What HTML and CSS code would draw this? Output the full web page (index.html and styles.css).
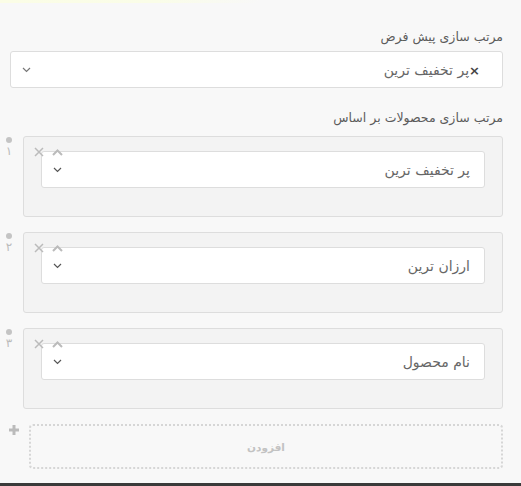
FILE: index.html
```html
<!DOCTYPE html>
<html lang="fa" dir="rtl">

<head>
    <meta charset="UTF-8">
    <meta name="viewport" content="width=device-width, initial-scale=1.0">
    <title>مرتب سازی</title>
    <link rel="stylesheet" href="styles.css">
</head>

<body>
    <div class="top-strip"></div>
    <div class="page">
        <label class="field-label">مرتب سازی پیش فرض</label>
        <div class="select-box main-select">
            <span class="value"><span class="clear">×</span>پر تخفیف ترین</span>
            <svg class="chevron" width="9" height="6" viewBox="0 0 9 6"><path d="M1 1l3.5 3.5L8 1" fill="none" stroke="#777" stroke-width="1.2"/></svg>
        </div>

        <label class="field-label second">مرتب سازی محصولات بر اساس</label>

        <div class="repeater">
            <div class="rep-row">
                <div class="rep-box">
                    <div class="select-box">
                        <span class="value">پر تخفیف ترین</span>
                        <svg class="chevron" width="9" height="6" viewBox="0 0 9 6"><path d="M1 1l3.5 3.5L8 1" fill="none" stroke="#555" stroke-width="1.2"/></svg>
                    </div>
                    <div class="row-tools">
                        <svg width="10" height="10" viewBox="0 0 10 10"><path d="M1 1l8 8M9 1l-8 8" stroke="#bbb" stroke-width="1.5"/></svg>
                        <svg width="11" height="7" viewBox="0 0 11 7"><path d="M1 6l4.5-4.5L10 6" fill="none" stroke="#bbb" stroke-width="2"/></svg>
                    </div>
                </div>
                <div class="rep-handle"><span class="dot"></span><span class="num">۱</span></div>
            </div>

            <div class="rep-row">
                <div class="rep-box">
                    <div class="select-box">
                        <span class="value">ارزان ترین</span>
                        <svg class="chevron" width="9" height="6" viewBox="0 0 9 6"><path d="M1 1l3.5 3.5L8 1" fill="none" stroke="#555" stroke-width="1.2"/></svg>
                    </div>
                    <div class="row-tools">
                        <svg width="10" height="10" viewBox="0 0 10 10"><path d="M1 1l8 8M9 1l-8 8" stroke="#bbb" stroke-width="1.5"/></svg>
                        <svg width="11" height="7" viewBox="0 0 11 7"><path d="M1 6l4.5-4.5L10 6" fill="none" stroke="#bbb" stroke-width="2"/></svg>
                    </div>
                </div>
                <div class="rep-handle"><span class="dot"></span><span class="num">۲</span></div>
            </div>

            <div class="rep-row">
                <div class="rep-box">
                    <div class="select-box">
                        <span class="value">نام محصول</span>
                        <svg class="chevron" width="9" height="6" viewBox="0 0 9 6"><path d="M1 1l3.5 3.5L8 1" fill="none" stroke="#555" stroke-width="1.2"/></svg>
                    </div>
                    <div class="row-tools">
                        <svg width="10" height="10" viewBox="0 0 10 10"><path d="M1 1l8 8M9 1l-8 8" stroke="#bbb" stroke-width="1.5"/></svg>
                        <svg width="11" height="7" viewBox="0 0 11 7"><path d="M1 6l4.5-4.5L10 6" fill="none" stroke="#bbb" stroke-width="2"/></svg>
                    </div>
                </div>
                <div class="rep-handle"><span class="dot"></span><span class="num">۳</span></div>
            </div>

            <div class="add-row">
                <button class="add-btn">افزودن</button>
                <div class="add-icon">
                    <svg width="12" height="12" viewBox="0 0 12 12"><path d="M6 1v10M1 6h10" stroke="#bbb" stroke-width="3"/></svg>
                </div>
            </div>
        </div>
    </div>
    <div class="bottom-line"></div>
</body>

</html>
```

FILE: styles.css
```css
* {
    box-sizing: border-box;
}

html,
body {
    height: 100%;
}

body {
    font-family: 'DejaVu Sans', 'Noto Sans', sans-serif;
    background-color: #f8f8f8;
    color: #555;
    margin: 0;
    display: flex;
    flex-direction: column;
}

.top-strip {
    height: 3px;
    flex-shrink: 0;
    background: linear-gradient(to left, #f8f8f8 50%, #fafde8 70%, #fbfde6);
}

.page {
    flex: 1;
    padding: 26px 18px 0 10px;
}

.field-label {
    display: block;
    font-size: 12.5px;
    color: #5c5c5c;
    line-height: 16px;
    margin-bottom: 6px;
}

.field-label.second {
    margin-top: 22px;
    margin-bottom: 10px;
}

.select-box {
    display: flex;
    align-items: center;
    justify-content: space-between;
    height: 37px;
    background: #ffffff;
    border: 1px solid #ddd;
    border-radius: 3px;
    padding: 0 14px 0 11px;
    font-size: 14px;
    color: #666;
}

.main-select {
    padding-right: 22px;
}

.clear {
    font-weight: bold;
    color: #444;
    font-size: 13px;
}

.chevron {
    display: block;
}

.repeater {
    margin-left: -10px;
}

.rep-row {
    display: flex;
    margin-bottom: 15px;
}

.rep-box {
    position: relative;
    flex: 1;
    height: 81px;
    background: #f3f3f3;
    border: 1px solid #ddd;
    border-radius: 3px;
    padding: 14px 17px 0;
}

.row-tools {
    position: absolute;
    top: 10px;
    left: 10px;
    display: flex;
    flex-direction: row-reverse;
    align-items: center;
    gap: 8px;
}

.rep-handle {
    width: 23px;
    display: flex;
    flex-direction: column;
    align-items: center;
    padding-right: 5px;
}

.dot {
    width: 6px;
    height: 6px;
    border-radius: 50%;
    background: #c4c4c4;
    margin-top: 1px;
}

.num {
    font-size: 12px;
    color: #bbb;
    margin-top: 1px;
}

.add-row {
    display: flex;
    margin-top: 1px;
}

.add-btn {
    flex: 1;
    height: 45px;
    background: transparent;
    border: 2px dotted #d6d6d6;
    border-radius: 4px;
    font-family: inherit;
    font-size: 10.5px;
    font-weight: bold;
    color: #c2c2c2;
}

.add-icon {
    width: 29px;
    display: flex;
    justify-content: center;
    padding-right: 1px;
}

.bottom-line {
    height: 3px;
    flex-shrink: 0;
    background: #3a3a3a;
}
```
